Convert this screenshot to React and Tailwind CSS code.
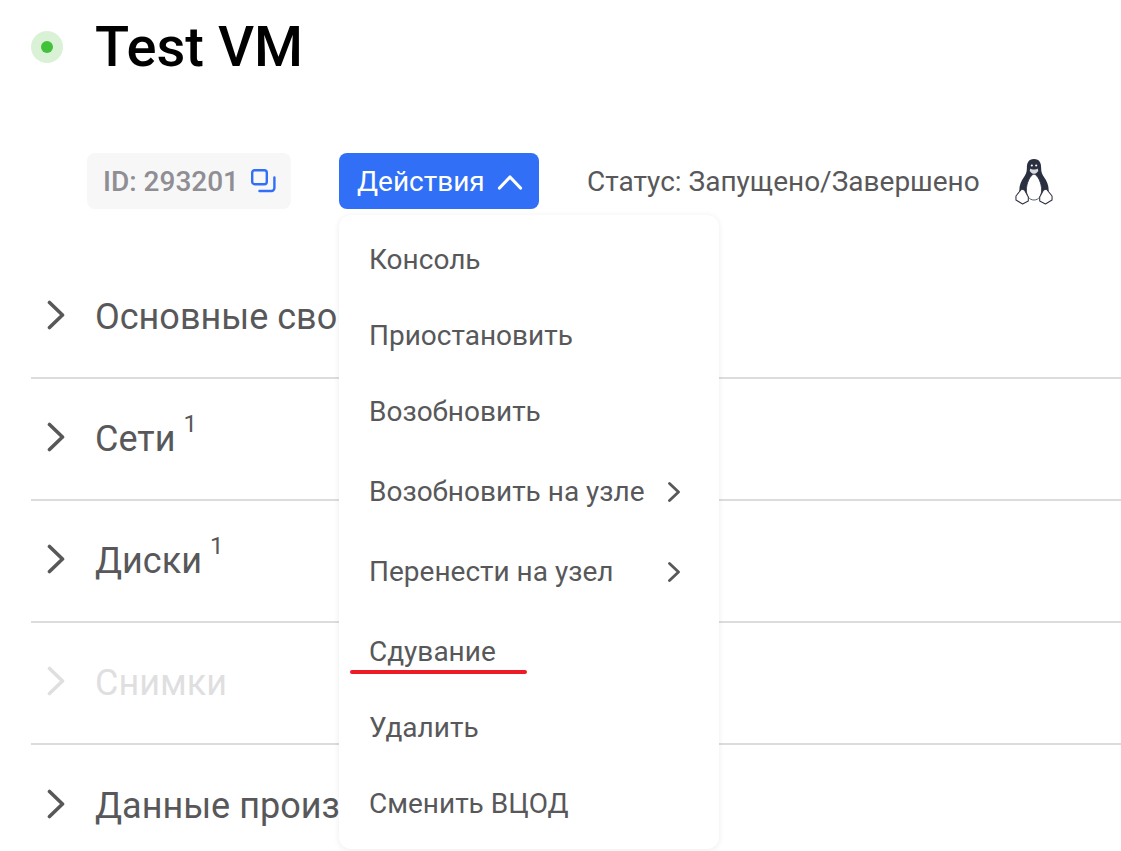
const sections = [
  { name: 'Основные свойства' },
  { name: 'Сети', count: 1 },
  { name: 'Диски', count: 1 },
  { name: 'Снимки', disabled: true },
  { name: 'Данные производительности' },
];

const menuItems = [
  { name: 'Консоль' },
  { name: 'Приостановить' },
  { name: 'Возобновить' },
  { name: 'Возобновить на узле', sub: true },
  { name: 'Перенести на узел', sub: true },
  { name: 'Сдувание', marked: true },
  { name: 'Удалить' },
  { name: 'Сменить ВЦОД' },
];

const CopyIcon = () => (
  <svg width="26" height="26" viewBox="0 0 26 26" fill="none" stroke="#316ff6" strokeWidth="2.4" strokeLinecap="round">
    <rect x="2.2" y="2.2" width="14.6" height="14" rx="2.5" />
    <path d="M24.4 9.5v10.5a3 3 0 0 1-3 3H9.5" />
  </svg>
);

const SectionChevron = () => (
  <svg width="18" height="30" viewBox="0 0 18 30" fill="none" stroke="currentColor" strokeWidth="3.6" strokeLinecap="round" strokeLinejoin="round" className="mb-[5px] shrink-0">
    <path d="M2.5 2.5 L15.5 15 L2.5 27.5" />
  </svg>
);

const SubChevron = () => (
  <svg width="12" height="20" viewBox="0 0 12 20" fill="none" stroke="currentColor" strokeWidth="2.8" strokeLinecap="round" strokeLinejoin="round">
    <path d="M1.5 1.5 L10.5 10 L1.5 18.5" />
  </svg>
);

// Tux, outline body with dark head and flanks
const Penguin = () => (
  <svg width="38" height="47" viewBox="0 0 40 47" preserveAspectRatio="none">
    <path d="M20 1C14 1 12.500 5 12.500 10c0 4-1 6-3 9-3 4-5 8-5 14l4 4h23l4-4c0-6-2-10-5-14-2-3-3-5-3-9 0-5-1.500-9-7.500-9z" fill="#2b3040" />
    <path d="M20 16c-4 1-8 9-8 16 0 6 3 10 8 10s8-4 8-10c0-7-4-15-8-16z" fill="#fff" stroke="#2b3040" strokeWidth="0.8" />
    <path d="M16 10.500c2 1.300 6 1.300 8 0l.5 2.500c-1.500 2-3 2.800-4.500 2.800s-3-.8-4.500-2.800z" fill="#d9dadf" />
    <circle cx="17.700" cy="7.500" r="1.100" fill="#fff" />
    <circle cx="22.300" cy="7.500" r="1.100" fill="#fff" />
    <path d="M7 31l-6 7v4l7 4 6-3v-4l-4-7z" fill="#fff" stroke="#2b3040" strokeWidth="1.1" strokeLinejoin="round" />
    <path d="M33 31l6 7v4l-7 4-6-3v-4l4-7z" fill="#fff" stroke="#2b3040" strokeWidth="1.1" strokeLinejoin="round" />
  </svg>
);

const Section = ({ name, count, disabled, last }) => (
  <div className={`flex h-[122px] items-center gap-[30px] pl-4 ${last ? '' : 'border-b-2 border-[#dcdcde]'} ${disabled ? 'text-[#dfdfe1]' : 'text-[#58585a]'}`}>
    <SectionChevron />
    <div className="text-[36px] leading-none whitespace-nowrap">
      {name}
      {count && <sup className="relative -top-[19px] ml-2 text-[24px] font-normal leading-none">{count}</sup>}
    </div>
  </div>
);

const Dropdown = () => (
  <div className="absolute left-0 top-[62px] z-10 w-[380px] rounded-xl bg-white py-[7px] shadow-[0_1px_6px_rgba(0,0,0,0.08)]">
    {menuItems.map(item => (
      <div key={item.name} className={`relative flex h-[76px] items-center justify-between pl-[30px] pr-[39px] text-[28px] leading-none text-[#58585a] ${item.sub || item.marked ? 'mt-1' : ''}`}>
        <span>{item.name}</span>
        {item.sub && <SubChevron />}
        {item.marked && <div className="absolute left-[11px] top-[56px] h-1 w-[177px] rounded-full bg-[#ed1c24]"></div>}
      </div>
    ))}
  </div>
);

export default function App() {
  return (
    <div className="h-[851px] w-[1121px] overflow-hidden bg-white font-['Roboto',sans-serif]">
      <div className="flex items-center gap-8 pl-[31px] pt-[15px]">
        <div className="flex h-8 w-8 items-center justify-center rounded-full bg-[#d9f2d6]">
          <div className="h-3 w-3 rounded-full bg-[#41c23a]"></div>
        </div>
        <h1 className="text-[56px] font-medium leading-[64px] text-black">Test VM</h1>
      </div>
      <div className="mt-[74px] flex h-14 items-center pl-[87px]">
        <div className="flex h-14 w-[204px] items-center gap-[11px] rounded-lg bg-[#f7f7f8] pl-4 text-[28px] font-medium text-[#8e8e93]">
          <span className="pt-[2px]">ID: 293201</span>
          <CopyIcon />
        </div>
        <div className="relative ml-12">
          <button className="flex h-14 w-[200px] items-center gap-3 rounded-lg bg-[#316ff6] pl-[18px] text-[28px] text-white">
            <span className="pt-[2px]">Действия</span>
            <svg width="26" height="16" viewBox="0 0 26 16" fill="none" stroke="currentColor" strokeWidth="3.2" strokeLinecap="round" strokeLinejoin="round" className="mt-[1px]">
              <path d="M2.500 14 L13 3 L23.500 14" />
            </svg>
          </button>
          <Dropdown />
        </div>
        <span className="ml-12 pt-[2px] text-[28px] text-[#58585a]">Статус: Запущено/Завершено</span>
        <div className="ml-[35px]"><Penguin /></div>
      </div>
      <div className="ml-[31px] mt-[48px]">
        {sections.map((s, i) => (
          <Section key={s.name} {...s} last={i === sections.length - 1} />
        ))}
      </div>
    </div>
  );
}
